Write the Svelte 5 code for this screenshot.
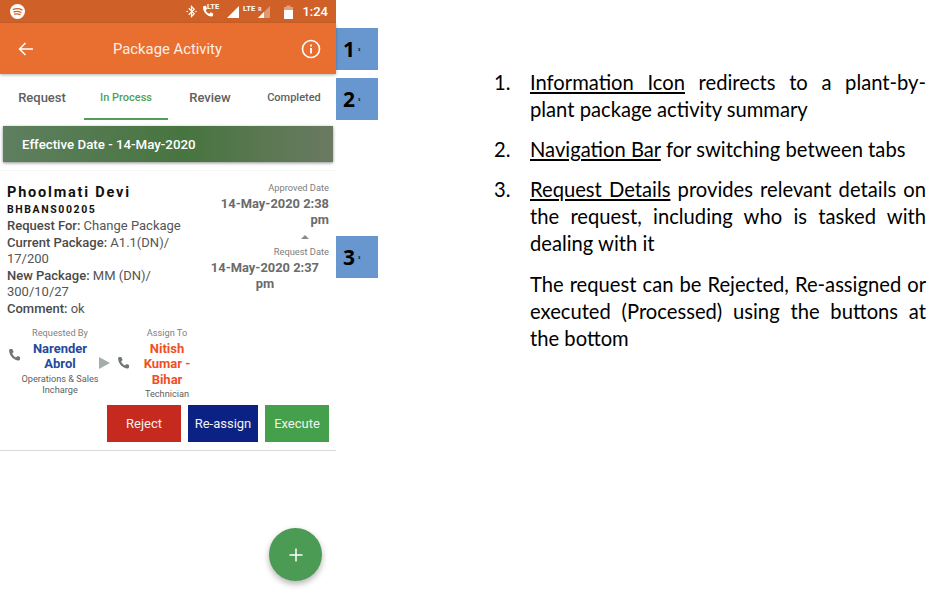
<script lang="ts">
  const tabs = [
    { label: "Request", small: false, active: false },
    { label: "In Process", small: true, active: true },
    { label: "Review", small: false, active: false },
    { label: "Completed", small: true, active: false },
  ];
  const markers = ["1", "2", "3"];
  const phonePath =
    "M3.6 1.2 L6 1 L7.6 4.6 L5.9 6.4 C6.6 8.4 8.2 10 10.2 10.8 L12 9 L15 10.4 L14.8 13 C14.6 14 13.8 14.4 13 14.2 C7.6 13.6 3 9 2.4 3 C2.4 2 2.8 1.4 3.6 1.2 Z";
</script>

<div class="page">
  <section class="phone">
    <div class="status">
      <svg class="spotify" viewBox="0 0 14 14" width="15" height="15">
        <circle cx="7" cy="7" r="7" fill="#fff" />
        <path d="M3 5 C6 4 9 4.3 11.2 5.5 M3.6 7.3 C6 6.6 8.4 6.9 10.3 7.9 M4.2 9.4 C6 8.9 7.8 9.1 9.4 9.9" stroke="#cf6128" stroke-width="1.2" fill="none" stroke-linecap="round" />
      </svg>
      <div class="status-right">
        <svg viewBox="0 0 12 14" width="11" height="13">
          <path d="M3 3.5 L9 9.5 L6 12.5 V1.5 L9 4.5 L3 10.5" stroke="#fff" stroke-width="1.3" fill="none" />
          <circle cx="1.2" cy="7" r="0.9" fill="#fff" />
          <circle cx="10.8" cy="7" r="0.9" fill="#fff" />
        </svg>
        <span class="call">
          <svg viewBox="0 0 16 16" width="13" height="13"><path d={phonePath} fill="#fff" /></svg>
          <b>LTE</b>
        </span>
        <svg class="sig" viewBox="0 0 12 12" width="12" height="12"><path d="M0 12 L12 0 V12 Z" fill="#fff" /></svg>
        <b class="lte">LTE</b>
        <b class="roam">R</b>
        <svg class="sig2" viewBox="0 0 12 12" width="12" height="12">
          <path d="M0 12 L12 0 V12 Z" fill="#fff" opacity="0.35" />
          <path d="M0 12 L6 6 V12 Z" fill="#fff" />
        </svg>
        <svg class="batt" viewBox="0 0 9 14" width="9" height="14">
          <path d="M2.5 0.5 H6.5 V2 H9 V14 H0 V2 H2.5 Z" fill="#fff" opacity="0.4" />
          <rect y="5" width="9" height="9" fill="#fff" />
        </svg>
        <span class="time">1:24</span>
      </div>
    </div>

    <header class="appbar">
      <svg viewBox="0 0 16 16" width="16" height="16">
        <path d="M15 8 H1.5 M7.5 2 L1.5 8 L7.5 14" stroke="#fff" stroke-width="1.5" fill="none" />
      </svg>
      <h1>Package Activity</h1>
      <svg viewBox="0 0 20 20" width="20" height="20">
        <circle cx="10" cy="10" r="8.5" stroke="#fff" stroke-width="1.6" fill="none" />
        <rect x="9.1" y="9" width="1.8" height="5.5" fill="#fff" />
        <rect x="9.1" y="5.6" width="1.8" height="1.9" fill="#fff" />
      </svg>
    </header>

    <nav class="tabs">
      {#each tabs as tab}
        <div class="tab" class:small={tab.small} class:active={tab.active}>{tab.label}</div>
      {/each}
    </nav>

    <div class="banner">Effective Date - 14-May-2020</div>

    <article class="card">
      <div class="top">
        <div class="details">
          <div class="name">Phoolmati Devi</div>
          <div class="code">BHBANS00205</div>
          <p><b>Request For:</b> Change Package</p>
          <p><b>Current Package:</b> A1.1(DN)/<br />17/200</p>
          <p><b>New Package:</b> MM (DN)/<br />300/10/27</p>
          <p><b>Comment:</b> ok</p>
        </div>
        <div class="dates">
          <div class="date-label">Approved Date</div>
          <div class="date">14-May-2020 2:38<br />pm</div>
          <div class="caret"></div>
          <div class="date-label">Request Date</div>
          <div class="date centered">14-May-2020 2:37<br />pm</div>
        </div>
      </div>

      <div class="people">
        <svg class="ph first" viewBox="0 0 16 16" width="14" height="14"><path d={phonePath} fill="#6f7673" /></svg>
        <div class="person by">
          <div class="role">Requested By</div>
          <div class="who blue">Narender<br />Abrol</div>
          <div class="job">Operations &amp; Sales<br />Incharge</div>
        </div>
        <div class="arrow"></div>
        <svg class="ph second" viewBox="0 0 16 16" width="14" height="14"><path d={phonePath} fill="#6f7673" /></svg>
        <div class="person to">
          <div class="role">Assign To</div>
          <div class="who red">Nitish<br />Kumar -<br />Bihar</div>
          <div class="job">Technician</div>
        </div>
      </div>

      <div class="actions">
        <button class="reject">Reject</button>
        <button class="assign">Re-assign</button>
        <button class="execute">Execute</button>
      </div>
    </article>

    <button class="fab" aria-label="Add">
      <svg viewBox="0 0 14 14" width="14" height="14"><path d="M7 0.5 V13.5 M0.5 7 H13.5" stroke="#fff" stroke-width="1.5" /></svg>
    </button>
  </section>

  <aside class="markers">
    {#each markers as m}
      <div class="marker">{m}<small>3</small></div>
    {/each}
  </aside>

  <section class="notes">
    <ol>
      <li><span class="num">1.</span><div><u>Information Icon</u> redirects to a plant-by-plant package activity summary</div></li>
      <li><span class="num">2.</span><div><u>Navigation Bar</u> for switching between tabs</div></li>
      <li>
        <span class="num">3.</span>
        <div>
          <u>Request Details</u> provides relevant details on the request, including who is tasked with dealing with it
          <p>The request can be Rejected, Re-assigned or executed (Processed) using the buttons at the bottom</p>
        </div>
      </li>
    </ol>
  </section>
</div>

<style>
  :global(body) {
    margin: 0;
    background: #fff;
  }

  .page {
    display: flex;
    width: 936px;
    height: 594px;
    overflow: hidden;
    font-family: Roboto, "Liberation Sans", sans-serif;
  }

  .phone {
    position: relative;
    flex: 0 0 336px;
    height: 594px;
    background: #fff;
  }

  .status {
    display: flex;
    align-items: center;
    justify-content: space-between;
    height: 23px;
    padding: 0 8px 0 10px;
    box-sizing: border-box;
    background: #cf6128;
    color: #fff;
  }

  .status-right {
    display: flex;
    align-items: center;
  }

  .call {
    display: flex;
    margin-left: 4px;
  }

  .status b {
    font-size: 7.5px;
    font-weight: 700;
    line-height: 8px;
  }

  .call b {
    margin: -2px 0 0 -7px;
  }

  .sig {
    margin-left: 8px;
  }

  .lte {
    margin: -6px 0 0 4px;
  }

  .roam {
    margin: -6px 0 0 3px;
    font-size: 5px !important;
  }

  .sig2 {
    margin-left: -3px;
  }

  .batt {
    margin-left: 14px;
  }

  .time {
    margin-left: 9px;
    font-size: 13px;
    font-weight: 500;
  }

  .appbar {
    display: flex;
    align-items: center;
    justify-content: space-between;
    height: 51px;
    padding: 0 15px 0 18px;
    box-sizing: border-box;
    background: #e96f30;
    box-shadow: 0 1px 3px rgb(0 0 0 / 0.3);
  }

  h1 {
    margin: 0;
    color: #fbeee6;
    font-size: 14.8px;
    font-weight: 400;
  }

  .tabs {
    display: flex;
    height: 45px;
    margin-top: 1px;
  }

  .tab {
    flex: 1;
    box-sizing: border-box;
    padding-top: 15px;
    color: #5f5f5f;
    text-align: center;
    font-size: 13px;
    font-weight: 500;
  }

  .tab.small {
    padding-top: 16px;
    font-size: 11px;
  }

  .tab.active {
    border-bottom: 2px solid #4f9f58;
    color: #4f9f58;
  }

  .banner {
    display: flex;
    align-items: center;
    height: 36px;
    margin: 6px 3px 0;
    padding-left: 19px;
    background: linear-gradient(90deg, #5f7f5f, #47753f 55%, #6a7a62);
    box-shadow: 0 1px 3px rgb(0 0 0 / 0.45);
    color: #fff;
    font-size: 13.3px;
    font-weight: 500;
  }

  .card {
    display: flex;
    flex-direction: column;
    height: 281px;
    margin-top: 8px;
    border-top: 1px solid #f6f6f6;
    border-bottom: 1px solid #d9d9d9;
    box-sizing: border-box;
  }

  .top {
    display: flex;
    justify-content: space-between;
    padding: 0 7px;
    height: 147px;
  }

  .details {
    padding-top: 13px;
    color: #555;
    font-size: 13px;
    line-height: 16.6px;
  }

  .details p {
    margin: 0;
  }

  .details b {
    color: #4a4a4a;
    font-weight: 500;
  }

  .name {
    color: #111;
    font-size: 14.5px;
    font-weight: 700;
    letter-spacing: 1.8px;
    line-height: 18px;
  }

  .code {
    color: #111;
    font-size: 10.5px;
    font-weight: 700;
    letter-spacing: 1.6px;
    line-height: 16px;
  }

  .dates {
    padding-top: 11px;
    text-align: right;
  }

  .date-label {
    color: #7d7d7d;
    font-size: 9.3px;
    line-height: 12px;
  }

  .date {
    margin-top: 2px;
    color: #6b6b6b;
    font-size: 12.9px;
    font-weight: 700;
    line-height: 15.5px;
  }

  .date.centered {
    margin-right: 10px;
    text-align: center;
  }

  .caret {
    width: 0;
    margin: 8px 20px 7px auto;
    border: 4px solid transparent;
    border-top: 0;
    border-bottom: 4px solid #8b8b8b;
  }

  .people {
    display: flex;
    align-items: flex-start;
    height: 87px;
    padding: 9px 0 0 7px;
    box-sizing: border-box;
  }

  .ph {
    flex: none;
  }

  .ph.first {
    margin-top: 21px;
  }

  .ph.second {
    margin-top: 29px;
  }

  .person {
    flex: none;
    color: #666;
    text-align: center;
    font-size: 9.2px;
    line-height: 11px;
  }

  .by {
    width: 78px;
  }

  .to {
    width: 74px;
  }

  .role {
    color: #808080;
  }

  .who {
    margin: 3px 0 1px;
    font-size: 13px;
    font-weight: 700;
    line-height: 15.4px;
  }

  .blue {
    color: #1f4a9e;
  }

  .red {
    color: #f04f24;
  }

  .job {
    color: #5e5e5e;
  }

  .arrow {
    flex: none;
    width: 0;
    margin: 29.5px 6px 0 0;
    border-top: 6.5px solid transparent;
    border-bottom: 6.5px solid transparent;
    border-left: 11px solid #a5ada7;
  }

  .actions {
    display: flex;
    justify-content: flex-end;
    gap: 7px;
    padding-right: 7px;
  }

  .actions button {
    height: 37px;
    padding: 0;
    border: 0;
    color: #f3f3f3;
    font: inherit;
    font-size: 13px;
  }

  .reject {
    width: 74px;
    background: #c62a1e;
  }

  .assign {
    width: 70px;
    background: #0b2183;
  }

  .execute {
    width: 64px;
    background: #45a04b;
  }

  .fab {
    position: absolute;
    left: 269px;
    top: 528px;
    display: flex;
    align-items: center;
    justify-content: center;
    width: 53px;
    height: 53px;
    padding: 0;
    border: 0;
    border-radius: 50%;
    background: #4c9b54;
    box-shadow: 0 3px 6px rgb(0 0 0 / 0.3);
  }

  .markers {
    flex: 0 0 42px;
    display: flex;
    flex-direction: column;
    gap: 8px;
    padding-top: 28px;
  }

  .marker {
    display: flex;
    align-items: center;
    height: 42px;
    padding-left: 7px;
    background: #6896cf;
    color: #000;
    font-family: "Open Sans", sans-serif;
    font-size: 21px;
    font-weight: 700;
  }

  .marker small {
    margin-left: 3px;
    font-size: 4px;
  }

  .marker:last-child {
    margin-top: 108px;
  }

  .notes {
    flex: 1;
    padding: 69px 10px 0 0;
    color: #000;
    font-family: Lato, "Open Sans", sans-serif;
    font-size: 20.2px;
    line-height: 27px;
    text-align: justify;
  }

  ol {
    margin: 0;
    padding-left: 116px;
    list-style: none;
  }

  li {
    display: grid;
    grid-template-columns: 36px 1fr;
    margin-bottom: 13px;
  }

  li p {
    margin: 14px 0 0;
  }
</style>
